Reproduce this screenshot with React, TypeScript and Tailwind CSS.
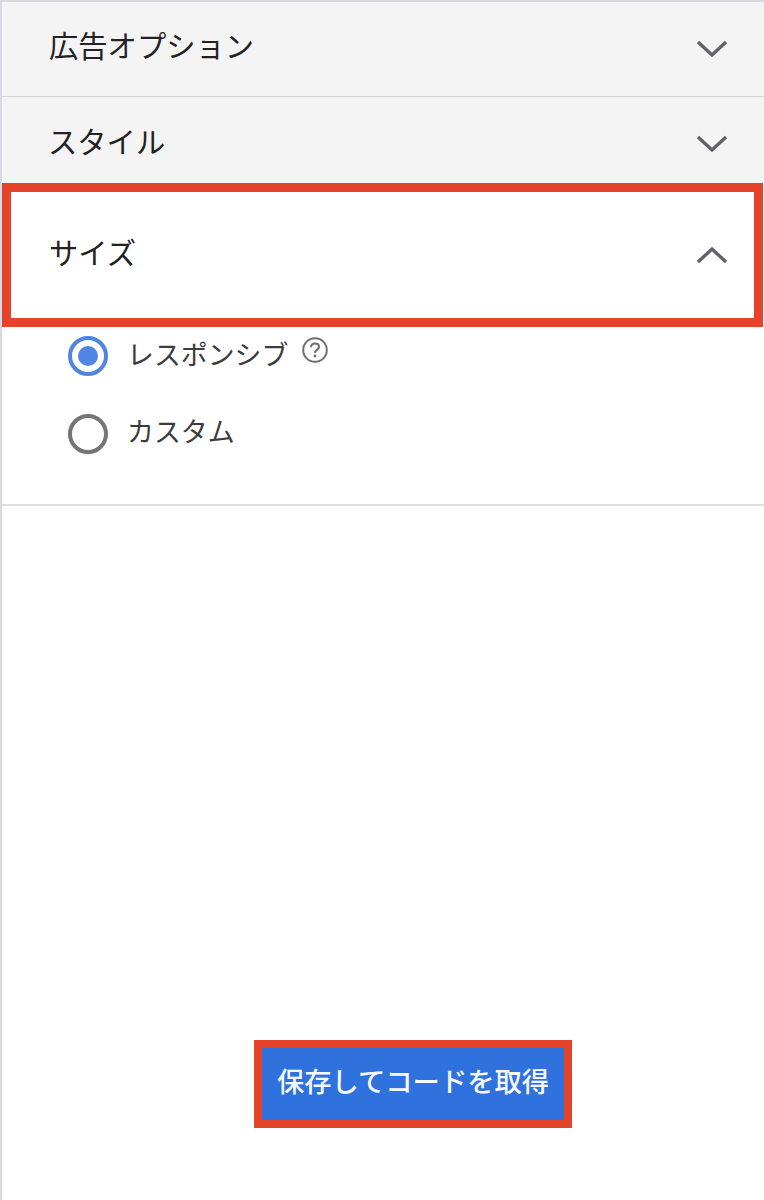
const FONT = "font-['Roboto','Noto_Sans_CJK_JP',sans-serif]";

function Chevron({ up }: { up?: boolean }) {
  return (
    <svg width="32" height="18" viewBox="0 0 32 18" fill="none" className="text-[#5f6368]">
      <path
        d={up ? 'M2 16 L16 3 L30 16' : 'M2 2 L16 15 L30 2'}
        stroke="currentColor"
        strokeWidth="3.4"
      />
    </svg>
  );
}

function HelpIcon() {
  return (
    <svg width="28" height="28" viewBox="0 0 28 28" fill="none" className="text-[#6f6f6f]">
      <circle cx="14" cy="14" r="11.8" stroke="currentColor" strokeWidth="2" />
      <path
        d="M10 11.2 C10 8.8 11.8 7.6 14 7.6 C16.2 7.6 18 8.9 18 11 C18 13.6 14 13.8 14 17"
        stroke="currentColor"
        strokeWidth="2"
      />
      <circle cx="14" cy="20" r="1.4" fill="currentColor" />
    </svg>
  );
}

export default function App() {
  return (
    <div className={`${FONT} h-[1200px] w-[764px] overflow-hidden bg-white border-l-2 border-[#d9dadf]`}>
      <div className="h-[2px] bg-[#d9dadf]" />

      <div className="flex h-[94px] items-center justify-between bg-[#f4f4f5] pl-[47px] pr-[36px] pb-[2px]">
        <span className="text-[29.3px] leading-none text-[#222222]">広告オプション</span>
        <span className="mt-[2px]">
          <Chevron />
        </span>
      </div>
      <div className="h-[1px] bg-[#d5d5d7]" />
      <div className="flex h-[86px] items-center justify-between bg-[#f4f4f5] pl-[46px] pr-[36px] pt-[8px]">
        <span className="text-[29.3px] leading-none text-[#222222]">スタイル</span>
        <Chevron />
      </div>

      <div className="mr-[1px] flex h-[144px] items-center justify-between border-[9px] border-[#e5432a] bg-white pl-[38px] pr-[26px]">
        <span className="text-[29.3px] leading-none text-[#222222]">サイズ</span>
        <Chevron up />
      </div>

      <div className="h-[179px] border-b-2 border-[#dfdfe2] pl-[66px]">
        <div className="flex h-[58px] items-start pt-[9px]">
          <div className="flex h-[40px] w-[40px] shrink-0 items-center justify-center rounded-full border-[4px] border-[#4f86e4]">
            <div className="h-[20px] w-[20px] rounded-full bg-[#4f86e4]" />
          </div>
          <span className="ml-[19px] mt-[2px] text-[26.9px] leading-[36px] text-[#3c3c3e]">レスポンシブ</span>
          <span className="ml-[13px]">
            <HelpIcon />
          </span>
        </div>
        <div className="mt-[29px] flex items-center">
          <div className="h-[40px] w-[40px] shrink-0 rounded-full border-[4px] border-[#757575]" />
          <span className="ml-[19px] mb-[3px] text-[26.9px] leading-[36px] text-[#3c3c3e]">カスタム</span>
        </div>
      </div>

      <div className="mt-[534px] flex justify-center pl-[60px]">
        <div className="flex h-[88px] w-[318px] items-center justify-center border-[8px] border-[#e5432a] bg-[#2f72de] pb-[1px]">
          <span className="text-[27.3px] font-medium leading-none text-[#f5f8fd]">保存してコードを取得</span>
        </div>
      </div>
    </div>
  );
}
